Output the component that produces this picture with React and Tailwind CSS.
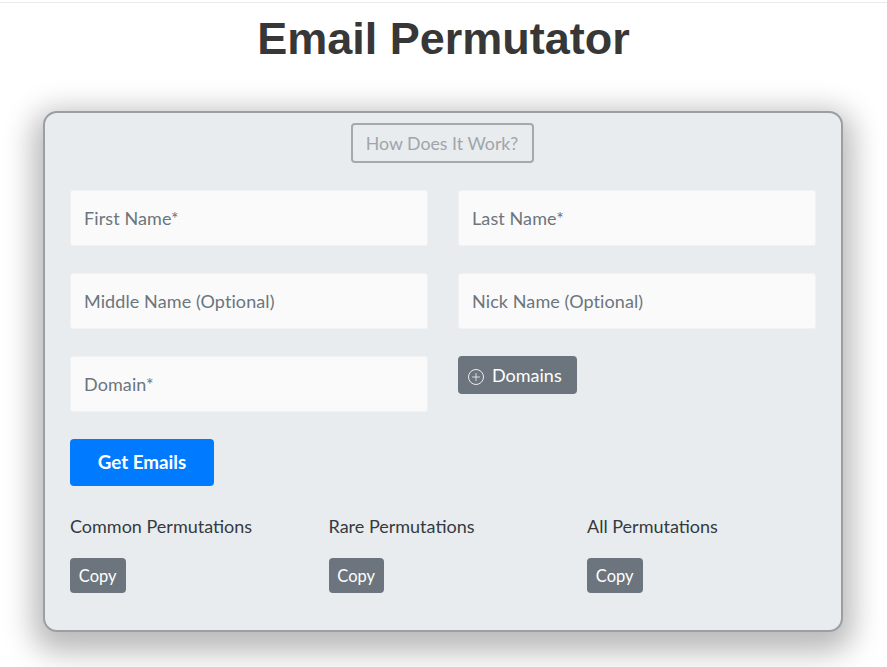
import { Plus } from 'lucide-react';

const Field = ({ placeholder }) => (
  <input
    type="text"
    placeholder={placeholder}
    className="w-full h-[56px] px-[13px] bg-[#fafafa] rounded-[3px] border border-[#f1f2f4] text-[18px] tracking-[0.1px] text-[#495057] placeholder:text-[#6c757d] outline-none"
  />
);

const CopyColumn = ({ title }) => (
  <div className="flex flex-col items-start">
    <p className="text-[18px] leading-[27px] text-[#343a40]">{title}</p>
    <button className="mt-[18px] h-[35px] w-[55.5px] pt-[2px] rounded-[4px] bg-[#6c757d] text-white text-[16.5px]">
      Copy
    </button>
  </div>
);

export default function App() {
  return (
    <div className="h-[667px] overflow-hidden bg-white font-['Lato',sans-serif]">
      <div className="mt-[2px] h-px bg-[#e9ecef]" />
      <h1 className="mt-[10px] text-center font-['Liberation_Sans',sans-serif] font-bold text-[45px] leading-[52px] text-[#373737]">
        Email Permutator
      </h1>
      <div className="mt-[46px] ml-[43px] w-[800px] h-[521px] rounded-[14px] border-2 border-[#9b9ea2] bg-[#e9ecef] shadow-[0_10px_30px_10px_rgba(0,0,0,0.28)] px-[25px] pt-[10px]">
        <div className="flex justify-center">
          <button className="mr-[2px] h-[40px] w-[183px] rounded-[4px] border-2 border-[#a5a9ad] text-[17.75px] text-[#a0a5aa]">
            How Does It Work?
          </button>
        </div>
        <div className="mt-[27px] grid grid-cols-2 gap-x-[30px] gap-y-[27px]">
          <Field placeholder="First Name*" />
          <Field placeholder="Last Name*" />
          <Field placeholder="Middle Name (Optional)" />
          <Field placeholder="Nick Name (Optional)" />
          <Field placeholder="Domain*" />
          <div>
            <button className="flex items-center h-[38px] w-[119px] pl-[10px] rounded-[4px] bg-[#6c757d] text-white text-[18px]">
              <span className="mr-[8px] mt-[3px] flex h-[16px] w-[16px] items-center justify-center rounded-full border border-[#e9ecef]">
                <Plus size={12} strokeWidth={1.5} />
              </span>
              Domains
            </button>
          </div>
        </div>
        <button className="mt-[27px] w-[144px] h-[47px] rounded-[4px] bg-[#007bff] text-white text-[18.75px] font-bold">
          Get Emails
        </button>
        <div className="mt-[27px] w-[775.5px] grid grid-cols-3">
          <CopyColumn title="Common Permutations" />
          <CopyColumn title="Rare Permutations" />
          <CopyColumn title="All Permutations" />
        </div>
      </div>
    </div>
  );
}
